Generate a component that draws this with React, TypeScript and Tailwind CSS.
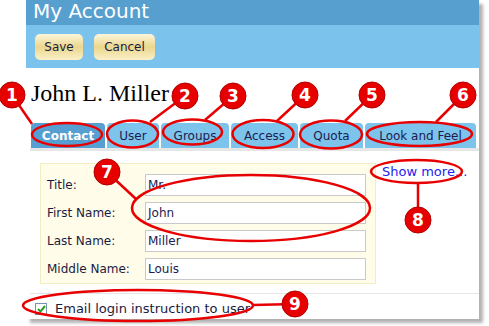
import React from "react";

const tabs = [
  { id: "contact", label: "Contact", w: "w-[74px]", active: true },
  { id: "user", label: "User", w: "w-[52px]" },
  { id: "groups", label: "Groups", w: "w-[68px]" },
  { id: "access", label: "Access", w: "w-[67px]" },
  { id: "quota", label: "Quota", w: "w-[63px]" },
  { id: "look", label: "Look and Feel", w: "w-[111px]" },
];

const fields = [
  { label: "Title:", value: "Mr." },
  { label: "First Name:", value: "John" },
  { label: "Last Name:", value: "Miller" },
  { label: "Middle Name:", value: "Louis" },
];

// callout markers drawn over the screenshot
const markers = [
  { n: 1, cx: 12, cy: 95, x2: 32, y2: 124 },
  { n: 2, cx: 185, cy: 96, x2: 150, y2: 122 },
  { n: 3, cx: 233, cy: 96, x2: 205, y2: 120 },
  { n: 4, cx: 305, cy: 95, x2: 277, y2: 121 },
  { n: 5, cx: 372, cy: 95, x2: 345, y2: 121 },
  { n: 6, cx: 463, cy: 95, x2: 436, y2: 122 },
  { n: 7, cx: 107, cy: 172, x2: 136, y2: 199 },
  { n: 8, cx: 418, cy: 220, x2: 418, y2: 183 },
  { n: 9, cx: 295, cy: 304, x2: 253, y2: 305 },
];

const ellipses = [
  { cx: 67, cy: 134.5, rx: 35, ry: 11.5 },
  { cx: 132.5, cy: 134, rx: 25.5, ry: 13.5 },
  { cx: 192.5, cy: 132, rx: 29.5, ry: 12.5 },
  { cx: 263, cy: 134, rx: 30.5, ry: 14 },
  { cx: 331, cy: 134.5, rx: 31, ry: 14 },
  { cx: 419.5, cy: 134, rx: 52.5, ry: 12 },
  { cx: 251, cy: 208, rx: 119, ry: 33 },
  { cx: 416.5, cy: 171.5, rx: 45.5, ry: 11.5 },
  { cx: 138, cy: 305.5, rx: 115, ry: 15.5 },
];

function Callouts() {
  return (
    <svg
      className="absolute inset-0 pointer-events-none"
      width="489"
      height="326"
      viewBox="0 0 489 326"
    >
      {ellipses.map((e, i) => (
        <ellipse key={i} cx={e.cx} cy={e.cy} rx={e.rx} ry={e.ry} fill="none" stroke="#e80000" strokeWidth="2.5" />
      ))}
      {markers.map((m) => (
        <line key={"l" + m.n} x1={m.cx} y1={m.cy} x2={m.x2} y2={m.y2} stroke="#e80000" strokeWidth="2.5" />
      ))}
      {markers.map((m) => (
        <g key={"c" + m.n}>
          <circle cx={m.cx} cy={m.cy} r="13" fill="#e60000" stroke="#b00000" strokeWidth="1" />
          <text
            x={m.cx}
            y={m.cy + 6}
            textAnchor="middle"
            fill="#fff"
            fontSize="17"
            fontWeight="700"
            fontFamily="DejaVu Sans, sans-serif"
          >
            {m.n}
          </text>
        </g>
      ))}
    </svg>
  );
}

export default function App() {
  return (
    <div className="relative w-[489px] h-[326px] bg-white overflow-hidden font-['DejaVu_Sans',sans-serif]">
      <div className="ml-[26px] w-[453px] bg-white shadow-[4px_4px_3px_rgba(0,0,0,0.3)]">
        <div className="h-[25px] bg-[#579fce] pl-[7px] text-[20px] leading-[23px] text-white">My Account</div>
        <div className="h-[43px] bg-[#7bc3ec] flex items-center gap-[11px] pl-[9px]">
          <button className="h-[26px] w-[48px] rounded-[5px] bg-gradient-to-b from-[#fdf6da] via-[#ebd68c] to-[#faf0c8] text-[12px] text-[#1b1b40]">
            Save
          </button>
          <button className="h-[26px] w-[61px] rounded-[5px] bg-gradient-to-b from-[#fdf6da] via-[#ebd68c] to-[#faf0c8] text-[12px] text-[#1b1b40]">
            Cancel
          </button>
        </div>

        <h1 className="mt-[11px] pl-[5px] font-['Liberation_Serif',serif] text-[24px] leading-[28px] text-black">
          John L. Miller
        </h1>

        <div className="mt-[16px] flex gap-[2px] pl-[5px]">
          {tabs.map((t) => (
            <div
              key={t.id}
              className={
                t.active
                  ? t.w + " h-[25px] rounded-t-[4px] bg-[#569fd2] flex items-center justify-center text-[12px] font-bold text-white"
                  : t.w + " h-[25px] rounded-t-[4px] bg-[#7dc4ec] flex items-center justify-center text-[12px] text-[#1b1b50]"
              }
            >
              {t.label}
            </div>
          ))}
        </div>
        <div className="ml-[4px] h-[3px] bg-[#e6e6e6]" />

        <div className="mt-[12px] ml-[14px] flex items-start gap-[6px]">
          <div className="w-[336px] h-[121px] border border-[#f3edc3] bg-[#fffdea] pt-[10px] pl-[6px] flex flex-col gap-[6px]">
            {fields.map((f) => (
              <div key={f.label} className="flex items-center h-[22px]">
                <span className="w-[98px] text-[12px] text-[#1b1b40]">{f.label}</span>
                <div className="w-[221px] h-[22px] border border-[#c9c9c9] bg-white pl-[2px] flex items-center text-[12px] text-[#1b1b50]">
                  {f.value}
                </div>
              </div>
            ))}
          </div>
          <a className="mt-[1px] text-[13px] leading-[15px] text-[#2323ee]">Show more...</a>
        </div>

        <div className="mt-[9px] ml-[4px] h-px bg-[#e6e6e6]" />
        <div className="h-[25px] pt-[4px] pl-[9px] flex items-center gap-[8px]">
          <span className="w-[12px] h-[12px] border border-[#7891b0] bg-white flex items-center justify-center">
            <svg width="9" height="8" viewBox="0 0 9 8">
              <path d="M1 4 L3.5 6.5 L8 1" fill="none" stroke="#2aa02a" strokeWidth="2" />
            </svg>
          </span>
          <span className="text-[13px] text-[#1b1b40]">Email login instruction to user</span>
        </div>
      </div>
      <Callouts />
    </div>
  );
}
